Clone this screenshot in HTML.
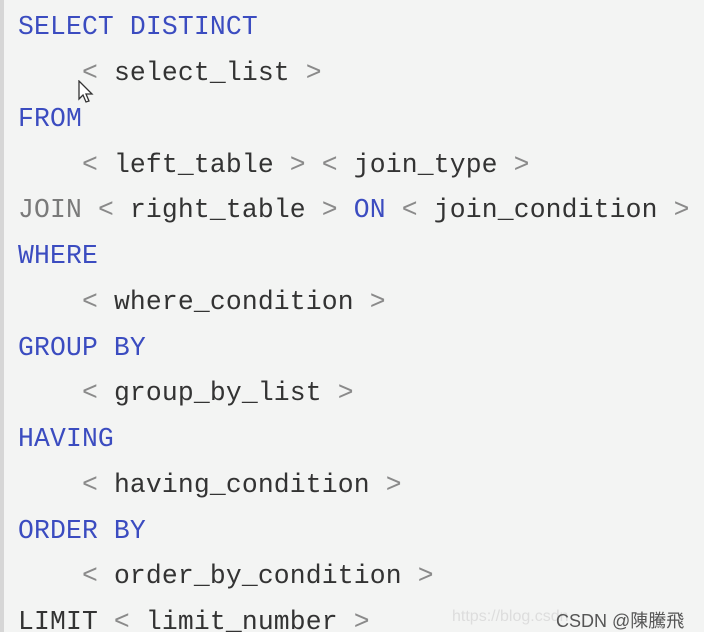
<!DOCTYPE html>
<html><head><meta charset="utf-8"><style>
html,body{margin:0;padding:0;width:704px;height:640px;overflow:hidden;background:#fff}
.box{position:absolute;left:0;top:0;width:704px;height:632px;background:#f3f4f3;border-left:4px solid #d6d6d6;box-sizing:border-box}
.l{position:absolute;left:18px;font-family:"Liberation Mono","Courier New",monospace;font-size:26.4px;line-height:30px;white-space:pre;color:#333;letter-spacing:0.15px}
.k{color:#3b4cc0}.g{color:#8a8a8a}.j{color:#7a7a7a}
.wm{position:absolute;left:452px;top:608px;font-family:"Liberation Sans",sans-serif;font-size:16px;color:#ddd}
.wm2{position:absolute;left:556px;top:607px;font-family:"Liberation Sans","Noto Sans CJK TC",sans-serif;font-size:18px;color:#555}
</style></head><body>
<div class="box"></div>
<div class="l" style="top:12px"><span class="k">SELECT DISTINCT</span></div>
<div class="l" style="top:58px">    <span class="g">&lt;</span> select_list <span class="g">&gt;</span></div>
<div class="l" style="top:104px"><span class="k">FROM</span></div>
<div class="l" style="top:150px">    <span class="g">&lt;</span> left_table <span class="g">&gt;</span> <span class="g">&lt;</span> join_type <span class="g">&gt;</span></div>
<div class="l" style="top:195px"><span class="j">JOIN</span> <span class="g">&lt;</span> right_table <span class="g">&gt;</span> <span class="k">ON</span> <span class="g">&lt;</span> join_condition <span class="g">&gt;</span></div>
<div class="l" style="top:241px"><span class="k">WHERE</span></div>
<div class="l" style="top:287px">    <span class="g">&lt;</span> where_condition <span class="g">&gt;</span></div>
<div class="l" style="top:333px"><span class="k">GROUP BY</span></div>
<div class="l" style="top:378px">    <span class="g">&lt;</span> group_by_list <span class="g">&gt;</span></div>
<div class="l" style="top:424px"><span class="k">HAVING</span></div>
<div class="l" style="top:470px">    <span class="g">&lt;</span> having_condition <span class="g">&gt;</span></div>
<div class="l" style="top:516px"><span class="k">ORDER BY</span></div>
<div class="l" style="top:561px">    <span class="g">&lt;</span> order_by_condition <span class="g">&gt;</span></div>
<div class="l" style="top:607px">LIMIT <span class="g">&lt;</span> limit_number <span class="g">&gt;</span></div>
<div class="wm">https://blog.csdn</div>
<div class="wm2">CSDN @陳騰飛</div>
<svg style="position:absolute;left:78px;top:80px" width="18" height="26" viewBox="0 0 18 26"><path d="M1 1 L1 19 L5 15 L8 22 L11 21 L8 14 L14 14 Z" fill="#fff" stroke="#333" stroke-width="1.3"/></svg>
</body></html>
